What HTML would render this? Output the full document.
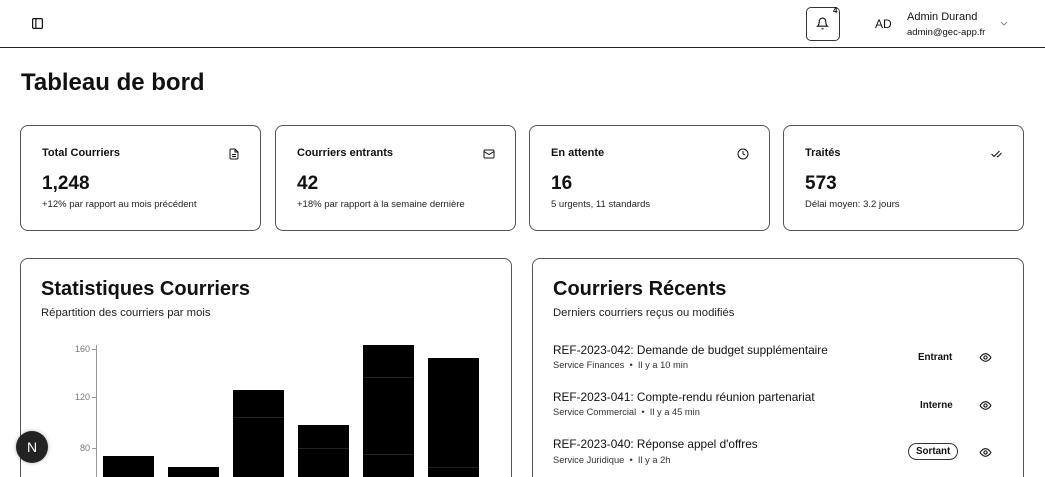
<!DOCTYPE html>
<html style="width:1045px;height:477px;overflow:hidden"><head><meta charset="utf-8">
<style>
*{box-sizing:border-box;margin:0;padding:0}
html,body{width:1045px;height:477px;overflow:hidden}
body{background:#fff;font-family:"Liberation Sans",sans-serif;color:#111;position:relative}
.abs{position:absolute}
.hdr{left:0;top:0;width:1045px;height:48px;border-bottom:1.5px solid #222}
.card{border:1px solid #555;border-radius:8px;background:#fff}
.ct{font-size:11px;font-weight:bold;left:21px;top:21px}
.cv{font-size:19px;font-weight:bold;left:21px;top:47px}
.cs{font-size:9.5px;left:21px;top:73px;color:#222}
.ci{right:20px;top:22px}
.tick{font-size:9px;color:#777;text-align:right;width:30px}
.bar{background:#000}
.it1{font-size:11.8px;color:#111}
.it2{font-size:9.3px;color:#333}
.badge{font-size:9.8px;font-weight:bold}
</style></head><body>
<div class="abs hdr"></div>
<svg class="abs" style="left:31px;top:17px" width="13" height="13" viewBox="0 0 24 24" fill="none" stroke="#111" stroke-width="2.2"><rect x="3" y="3" width="18" height="18" rx="2"/><path d="M9 3v18"/></svg>
<div class="abs" style="left:806px;top:7px;width:34px;height:34px;border:1px solid #333;border-radius:5px"></div>
<svg class="abs" style="left:816px;top:17px" width="13" height="13" viewBox="0 0 24 24" fill="none" stroke="#111" stroke-width="2"><path d="M6 8a6 6 0 0 1 12 0c0 7 3 9 3 9H3s3-2 3-9"/><path d="M10.3 21a1.94 1.94 0 0 0 3.4 0"/></svg>
<div class="abs" style="left:833px;top:6px;font-size:8px;font-weight:bold">4</div>
<div class="abs" style="left:875px;top:17px;font-size:12px">AD</div>
<div class="abs" style="left:907px;top:11px;font-size:11px">Admin Durand</div>
<div class="abs" style="left:907px;top:27px;font-size:9.5px">admin@gec-app.fr</div>
<svg class="abs" style="left:999px;top:20px" width="10" height="8" viewBox="0 0 10 8" fill="none" stroke="#888" stroke-width="1"><path d="M2 2l3 3 3-3"/></svg>

<div class="abs" style="left:21px;top:69px;font-size:24px;font-weight:bold">Tableau de bord</div>

<div class="abs card" style="left:20px;top:125px;width:241px;height:106px">
<div class="abs ct">Total Courriers</div><div class="abs cv">1,248</div><div class="abs cs">+12% par rapport au mois précédent</div>
<svg class="abs ci" width="12" height="12" viewBox="0 0 24 24" fill="none" stroke="#111" stroke-width="2"><path d="M14 2H6a2 2 0 0 0-2 2v16a2 2 0 0 0 2 2h12a2 2 0 0 0 2-2V8z"/><path d="M14 2v6h6M8 13h8M8 17h8"/></svg></div>
<div class="abs card" style="left:275px;top:125px;width:241px;height:106px">
<div class="abs ct">Courriers entrants</div><div class="abs cv">42</div><div class="abs cs">+18% par rapport à la semaine dernière</div>
<svg class="abs ci" width="12" height="12" viewBox="0 0 24 24" fill="none" stroke="#111" stroke-width="2"><rect x="2" y="4" width="20" height="16" rx="2"/><path d="M22 7l-10 6L2 7"/></svg></div>
<div class="abs card" style="left:529px;top:125px;width:241px;height:106px">
<div class="abs ct">En attente</div><div class="abs cv">16</div><div class="abs cs">5 urgents, 11 standards</div>
<svg class="abs ci" width="12" height="12" viewBox="0 0 24 24" fill="none" stroke="#111" stroke-width="2"><circle cx="12" cy="12" r="10"/><path d="M12 6v6l4 2"/></svg></div>
<div class="abs card" style="left:783px;top:125px;width:241px;height:106px">
<div class="abs ct">Traités</div><div class="abs cv">573</div><div class="abs cs">Délai moyen: 3.2 jours</div>
<svg class="abs ci" width="13" height="12" viewBox="0 0 24 24" fill="none" stroke="#111" stroke-width="2"><path d="M18 6L7 17l-5-5M22 10l-7.5 7.5L13 16"/></svg></div>

<div class="abs card" style="left:20px;top:258px;width:492px;height:240px">
<div class="abs" style="left:20px;top:19px;font-size:20px;font-weight:bold">Statistiques Courriers</div>
<div class="abs" style="left:20px;top:48px;font-size:11.3px;color:#222">Répartition des courriers par mois</div>
</div>
<div class="abs" style="left:96px;top:345px;width:1px;height:140px;background:#999"></div>
<div class="abs tick" style="left:60px;top:344px">160</div>
<div class="abs tick" style="left:60px;top:392px">120</div>
<div class="abs tick" style="left:60px;top:443px">80</div>
<div class="abs" style="left:92px;top:349px;width:4px;height:1px;background:#999"></div>
<div class="abs" style="left:92px;top:397px;width:4px;height:1px;background:#999"></div>
<div class="abs" style="left:92px;top:448px;width:4px;height:1px;background:#999"></div>
<div class="abs bar" style="left:103px;top:456px;width:51px;height:30px"></div>
<div class="abs bar" style="left:168px;top:467px;width:51px;height:20px"></div>
<div class="abs bar" style="left:233px;top:390px;width:51px;height:100px"></div>
<div class="abs" style="left:233px;top:417px;width:51px;height:1px;background:#222"></div>
<div class="abs bar" style="left:298px;top:425px;width:51px;height:60px"></div>
<div class="abs" style="left:298px;top:448px;width:51px;height:1px;background:#222"></div>
<div class="abs bar" style="left:363px;top:345px;width:51px;height:140px"></div>
<div class="abs" style="left:363px;top:377px;width:51px;height:1px;background:#222"></div>
<div class="abs" style="left:363px;top:454px;width:51px;height:1px;background:#222"></div>
<div class="abs bar" style="left:428px;top:358px;width:51px;height:130px"></div>
<div class="abs" style="left:428px;top:467px;width:51px;height:1px;background:#222"></div>

<div class="abs card" style="left:532px;top:258px;width:492px;height:240px">
<div class="abs" style="left:20px;top:19px;font-size:20px;font-weight:bold">Courriers Récents</div>
<div class="abs" style="left:20px;top:48px;font-size:11.3px;color:#222">Derniers courriers reçus ou modifiés</div>
</div>
<div class="abs it1" style="left:553px;top:343px">REF-2023-042: Demande de budget supplémentaire</div>
<div class="abs it2" style="left:553px;top:360px">Service Finances &nbsp;•&nbsp; Il y a 10 min</div>
<div class="abs badge" style="left:918px;top:352px">Entrant</div>
<div class="abs it1" style="left:553px;top:390px">REF-2023-041: Compte-rendu réunion partenariat</div>
<div class="abs it2" style="left:553px;top:407px">Service Commercial &nbsp;•&nbsp; Il y a 45 min</div>
<div class="abs badge" style="left:920px;top:400px">Interne</div>
<div class="abs it1" style="left:553px;top:437px">REF-2023-040: Réponse appel d'offres</div>
<div class="abs it2" style="left:553px;top:455px">Service Juridique &nbsp;•&nbsp; Il y a 2h</div>
<div class="abs badge" style="left:908px;top:443px;border:1px solid #333;border-radius:9px;padding:2px 7px">Sortant</div>
<svg class="abs" style="left:979px;top:351px" width="13" height="13" viewBox="0 0 24 24" fill="none" stroke="#111" stroke-width="2"><path d="M2 12s4-7 10-7 10 7 10 7-4 7-10 7S2 12 2 12z"/><circle cx="12" cy="12" r="3"/></svg>
<svg class="abs" style="left:979px;top:399px" width="13" height="13" viewBox="0 0 24 24" fill="none" stroke="#111" stroke-width="2"><path d="M2 12s4-7 10-7 10 7 10 7-4 7-10 7S2 12 2 12z"/><circle cx="12" cy="12" r="3"/></svg>
<svg class="abs" style="left:979px;top:446px" width="13" height="13" viewBox="0 0 24 24" fill="none" stroke="#111" stroke-width="2"><path d="M2 12s4-7 10-7 10 7 10 7-4 7-10 7S2 12 2 12z"/><circle cx="12" cy="12" r="3"/></svg>

<div class="abs" style="left:16px;top:431px;width:32px;height:32px;border-radius:50%;background:#222;color:#fff;font-size:14px;text-align:center;line-height:32px;box-shadow:0 0 4px rgba(0,0,0,.3)">N</div>
</body></html>
